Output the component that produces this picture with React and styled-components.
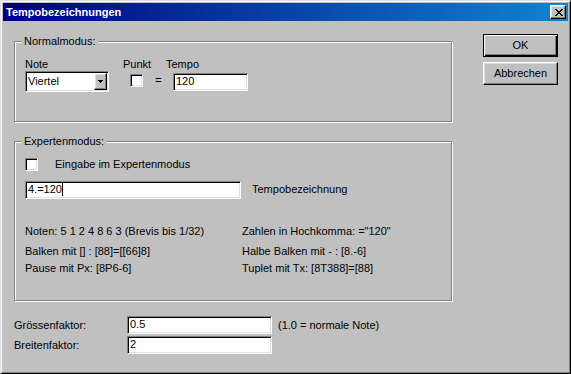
import React from "react";
import styled, { createGlobalStyle } from "styled-components";

const GlobalStyle = createGlobalStyle`
  html, body {
    margin: 0;
    padding: 0;
    background: #c0c0c0;
  }
  body {
    font-family: "Liberation Sans", Arial, sans-serif;
    font-size: 11px;
  }
`;

const Window = styled.div`
  box-sizing: border-box;
  width: 571px;
  height: 374px;
  background: #c0c0c0;
  border: 1px solid;
  border-color: #dfdfdf #000 #000 #dfdfdf;
  box-shadow: inset 1px 1px #fff, inset -1px -1px #808080;
  padding: 2px;
  display: flex;
  flex-direction: column;
  color: #000;
  font-family: "Liberation Sans", Arial, sans-serif;
  font-size: 11px;
  line-height: 13px;
`;

const TitleBar = styled.div`
  height: 18px;
  flex-shrink: 0;
  display: flex;
  align-items: center;
  justify-content: space-between;
  padding: 0 2px 0 3px;
  background: linear-gradient(to right, #000080, #1084d0);
`;

const Title = styled.span`
  color: #fff;
  font-weight: bold;
  font-size: 11px;
  line-height: 18px;
`;

const raised = `
  box-sizing: border-box;
  background: #c0c0c0;
  border: 1px solid;
  border-color: #fff #000 #000 #fff;
  box-shadow: inset -1px -1px #808080, inset 1px 1px #dfdfdf;
`;

const sunken = `
  box-sizing: border-box;
  background: #fff;
  border: 1px solid;
  border-color: #808080 #fff #fff #808080;
  box-shadow: inset 1px 1px #000, inset -1px -1px #dfdfdf;
`;

const CloseButton = styled.div`
  ${raised}
  width: 16px;
  height: 14px;
  display: flex;
  align-items: center;
  justify-content: center;
  padding-left: 1px;
`;

const Body = styled.div`
  flex: 1;
  display: flex;
  padding: 0 10px 0 11px;
`;

const LeftCol = styled.div`
  width: 438px;
  display: flex;
  flex-direction: column;
`;

const ButtonCol = styled.div`
  margin-left: 31px;
  margin-top: 13px;
  display: flex;
  flex-direction: column;
  gap: 5px;
`;

const Button = styled.div`
  ${raised}
  width: 75px;
  height: 23px;
  display: flex;
  align-items: center;
  justify-content: center;
  ${(p) =>
    p.$default &&
    `
    border: 1px solid #000;
    box-shadow: inset 1px 1px #fff, inset -1px -1px #000, inset -2px -2px #808080;
  `}
`;

const Group = styled.div`
  box-sizing: border-box;
  margin-top: ${(p) => p.$top}px;
  height: ${(p) => p.$h}px;
  border: 1px solid #808080;
  box-shadow: 1px 1px #fff, inset 1px 1px #fff;
  padding: 0 10px;
`;

const Legend = styled.div`
  width: fit-content;
  margin: -7px 0 0 -3px;
  padding: 0 2px;
  background: #c0c0c0;
  line-height: 13px;
`;

const NormalGrid = styled.div`
  margin-top: 10px;
  display: grid;
  grid-template-columns: 98px 43px auto;
  grid-template-rows: 13px auto;
`;

const PunktCell = styled.div`
  display: flex;
  align-items: flex-start;
  padding-top: 3px;
`;

const Eq = styled.span`
  margin-left: 12px;
`;

const TempoCell = styled.div`
  padding: 2px 0 0 7px;
`;

const Field = styled.div`
  ${sunken}
  width: ${(p) => p.$w}px;
  height: 18px;
  padding: 1px 2px 0;
  line-height: 13px;
  white-space: nowrap;
`;

const Caret = styled.span`
  display: inline-block;
  width: 1px;
  height: 13px;
  background: #000;
  vertical-align: top;
`;

const Check = styled.div`
  ${sunken}
  width: 13px;
  height: 13px;
  flex-shrink: 0;
  margin-left: ${(p) => p.$ml || 0}px;
`;

const Combo = styled.div`
  ${sunken}
  width: 84px;
  height: 21px;
  padding: 1px;
  display: flex;
`;

const ComboValue = styled.div`
  flex: 1;
  padding-left: 1px;
  line-height: 17px;
`;

const DropButton = styled.div`
  ${raised}
  width: 13px;
  height: 17px;
  display: flex;
  align-items: center;
  justify-content: center;
`;

const CheckRow = styled.div`
  margin-top: 10px;
  display: flex;
  align-items: flex-start;
`;

const CheckLabel = styled.span`
  margin-left: 17px;
`;

const EditRow = styled.div`
  margin-top: 10px;
  display: flex;
  align-items: flex-start;
`;

const SideLabel = styled.span`
  margin: 2px 0 0 11px;
`;

const HelpGrid = styled.div`
  margin-top: 26px;
  display: grid;
  grid-template-columns: 217px auto;
  grid-template-rows: 20px 17px 13px;
  white-space: nowrap;
`;

const FactorGrid = styled.div`
  margin-top: 15px;
  display: grid;
  grid-template-columns: 113px 145px auto;
  grid-auto-rows: 18px;
  row-gap: 2px;
  align-items: center;
`;

const Note = styled.span`
  margin-left: 6px;
`;

const CloseGlyph = () => (
  <svg width="8" height="7" viewBox="0 0 8 7" shapeRendering="crispEdges">
    <path
      fill="#000"
      d="M0 0h2v1H0zM6 0h2v1H6zM1 1h2v1H1zM5 1h2v1H5zM2 2h4v1H2zM3 3h2v1H3zM2 4h4v1H2zM1 5h2v1H1zM5 5h2v1H5zM0 6h2v1H0zM6 6h2v1H6z"
    />
  </svg>
);

const DownArrow = () => (
  <svg width="5" height="3" viewBox="0 0 5 3" shapeRendering="crispEdges">
    <path fill="#000" d="M0 0h5v1H0zM1 1h3v1H1zM2 2h1v1H2z" />
  </svg>
);

const App = () => {
  return (
    <>
      <GlobalStyle />
      <Window>
        <TitleBar>
          <Title>Tempobezeichnungen</Title>
          <CloseButton>
            <CloseGlyph />
          </CloseButton>
        </TitleBar>
        <Body>
          <LeftCol>
            <Group $top={20} $h={81}>
              <Legend>Normalmodus:</Legend>
              <NormalGrid>
                <span>Note</span>
                <span>Punkt</span>
                <span>Tempo</span>
                <Combo>
                  <ComboValue>Viertel</ComboValue>
                  <DropButton>
                    <DownArrow />
                  </DropButton>
                </Combo>
                <PunktCell>
                  <Check $ml={7} />
                  <Eq>=</Eq>
                </PunktCell>
                <TempoCell>
                  <Field $w={75}>120</Field>
                </TempoCell>
              </NormalGrid>
            </Group>

            <Group $top={19} $h={160}>
              <Legend>Expertenmodus:</Legend>
              <CheckRow>
                <Check />
                <CheckLabel>Eingabe im Expertenmodus</CheckLabel>
              </CheckRow>
              <EditRow>
                <Field $w={216}>
                  4.=120
                  <Caret />
                </Field>
                <SideLabel>Tempobezeichnung</SideLabel>
              </EditRow>
              <HelpGrid>
                <span>Noten: 5 1 2 4 8 6 3 (Brevis bis 1/32)</span>
                <span>Zahlen in Hochkomma: ="120"</span>
                <span>Balken mit [] : [88]=[[66]8]</span>
                <span>Halbe Balken mit - : [8.-6]</span>
                <span>Pause mit Px: [8P6-6]</span>
                <span>Tuplet mit Tx: [8T388]=[88]</span>
              </HelpGrid>
            </Group>

            <FactorGrid>
              <span>Grössenfaktor:</span>
              <Field $w={145}>0.5</Field>
              <Note>(1.0 = normale Note)</Note>
              <span>Breitenfaktor:</span>
              <Field $w={145}>2</Field>
            </FactorGrid>
          </LeftCol>

          <ButtonCol>
            <Button $default>OK</Button>
            <Button>Abbrechen</Button>
          </ButtonCol>
        </Body>
      </Window>
    </>
  );
};

export default App;
